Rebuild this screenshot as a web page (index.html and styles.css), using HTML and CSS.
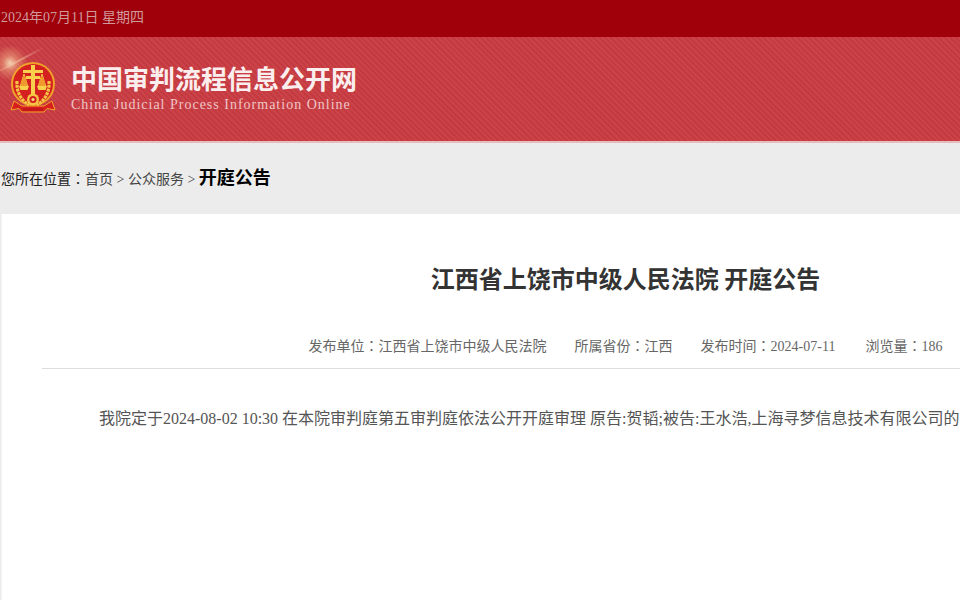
FILE: index.html
```html
<!DOCTYPE html>
<html lang="zh-CN">
<head>
    <meta charset="UTF-8">
    <meta name="viewport" content="width=device-width, initial-scale=1.0">
    <title>开庭公告</title>
    <link rel="stylesheet" href="styles.css">
</head>
<body>
    <div class="top-bar">2024年07月11日 星期四</div>
    <div class="banner">
        <div class="streak"></div>
        <div class="glare"></div>
        <svg class="emblem" width="46" height="52" viewBox="0 0 46 52">
            <!-- ribbon -->
            <path d="M4 40 L1 49 L9 47.5 L12 51 L34 51 L37 47.5 L45 49 L42 40 L34 45 H12 Z" fill="#d81e1e" stroke="#f0a428" stroke-width="1"/>
            <circle cx="23" cy="23" r="22" fill="#f0a22a"/>
            <circle cx="23" cy="23" r="20" fill="#d4201f"/>
            <!-- wheat -->
            <path d="M7 20 Q6 36 19 44 M39 20 Q40 36 27 44" fill="none" stroke="#f6c445" stroke-width="3.2" stroke-dasharray="3 0.8"/>
            <!-- upright and beam -->
            <path d="M21 4 H25 V9 H33 V12 H25 V15 H30 V18 H25 V35 H21 V18 H16 V15 H21 V12 H13 V9 H21 Z" fill="#f9d04c"/>
            <!-- scales -->
            <path d="M14 13 L10 26 M14 13 L18 26 M32 13 L28 26 M32 13 L36 26" stroke="#f6c445" stroke-width="1"/>
            <path d="M9 25 H19 L17.5 29 H10.5 Z M27 25 H37 L35.5 29 H28.5 Z" fill="#f9d04c"/>
            <path d="M11 21 L14 15 L17 21 V25 H11 Z M29 21 L32 15 L35 21 V25 H29 Z" fill="#ef9a2c"/>
            <!-- gear -->
            <circle cx="23" cy="38.5" r="6" fill="#f6c445"/>
            <circle cx="23" cy="38.5" r="3.6" fill="#d4201f"/>
            <circle cx="23" cy="38.5" r="1.6" fill="#f6d97a"/>
            <path d="M13 47 H33 V50 H13 Z" fill="#c4161c"/>
        </svg>
        <div class="site-name">
            <div class="site-cn">中国审判流程信息公开网</div>
            <div class="site-en">China Judicial Process Information Online</div>
        </div>
    </div>
    <div class="crumbs">您所在位置<span class="colon" lang="zh-TW">：</span><span class="crumb-links">首页 &gt; 公众服务 &gt;</span> <strong>开庭公告</strong></div>
    <div class="panel">
        <h1>江西省上饶市中级人民法院 开庭公告</h1>
        <div class="meta">
            <span>发布单位<span class="colon" lang="zh-TW">：</span>江西省上饶市中级人民法院</span>
            <span>所属省份<span class="colon" lang="zh-TW">：</span>江西</span>
            <span>发布时间<span class="colon" lang="zh-TW">：</span>2024-07-11</span>
            <span class="views">浏览量<span class="colon" lang="zh-TW">：</span>186</span>
        </div>
        <p class="notice">我院定于2024-08-02 10:30 在本院审判庭第五审判庭依法公开开庭审理 原告:贺韬;被告:王水浩,上海寻梦信息技术有限公司的</p>
    </div>
</body>
</html>
```

FILE: styles.css
```css
html, body {
    height: 100%;
}
body {
    font-family: "Liberation Serif", "Noto Sans CJK SC", serif;
    background-color: #ececec;
    margin: 0;
    overflow: hidden;
    width: 1209px;
    display: flex;
    flex-direction: column;
}
.top-bar {
    height: 37px;
    line-height: 35px;
    background-color: #9f000a;
    color: #d09a9c;
    font-size: 14px;
    padding-left: 1px;
}
.banner {
    position: relative;
    width: 960px;
    height: 106px;
    box-sizing: border-box;
    display: flex;
    align-items: center;
    padding: 10px 0 0 10px;
    overflow: hidden;
    background-color: #c63a40;
    background-image: repeating-linear-gradient(45deg, #c43a40 0, #c43a40 2px, #ca4349 2px, #ca4349 4px);
    border-bottom: 2px solid #e6bcbc;
}
.streak {
    position: absolute;
    left: -3px;
    top: 21px;
    width: 50px;
    height: 2px;
    transform: rotate(-28deg);
    background: linear-gradient(90deg, rgba(250, 200, 170, 0.2), rgba(250, 205, 175, 0.7) 30%, rgba(250, 200, 170, 0));
}
.glare {
    position: absolute;
    left: -8px;
    top: 8px;
    width: 36px;
    height: 36px;
    border-radius: 50%;
    background: radial-gradient(circle, #f5d0b0 0, rgba(240, 170, 130, 0.55) 28%, rgba(240, 170, 130, 0) 70%);
}
.emblem {
    position: relative;
    margin: 0 15px 14px 0;
    flex-shrink: 0;
}
.site-name {
    margin-bottom: 3px;
}
.site-cn {
    font-family: "Noto Sans CJK SC", sans-serif;
    font-size: 26px;
    font-weight: 700;
    line-height: 34px;
    margin-top: -11px;
    color: #fbeeee;
}
.site-en {
    font-size: 14px;
    letter-spacing: 1px;
    line-height: 18px;
    margin-top: 1px;
    color: #efc6c6;
}
.crumbs {
    height: 71px;
    line-height: 70px;
    font-size: 14px;
    color: #222;
    padding-left: 1px;
}
.crumb-links {
    color: #444;
}
.crumbs strong {
    font-size: 18px;
    color: #000;
}
.colon {
    font-family: "Noto Sans CJK TC", sans-serif;
}
.panel {
    flex: 1;
    margin-left: 1px;
    padding: 0 0 0 40px;
    background-color: #fff;
    border-left: 1px solid #f4f4f4;
}
h1 {
    margin: 0;
    padding-top: 45px;
    font-family: "Noto Sans CJK SC", sans-serif;
    font-size: 24px;
    line-height: 38px;
    color: #333;
    text-align: center;
}
.meta {
    margin-top: 38px;
    padding-bottom: 11px;
    border-bottom: 1px solid #ddd;
    display: flex;
    justify-content: center;
    gap: 28px;
    font-size: 14px;
    line-height: 20px;
    color: #666;
}
.views {
    margin-left: 2px;
}
.notice {
    margin: 40px 0 0;
    text-indent: 57px;
    font-size: 16px;
    line-height: 20px;
    color: #555;
    white-space: nowrap;
}
```
